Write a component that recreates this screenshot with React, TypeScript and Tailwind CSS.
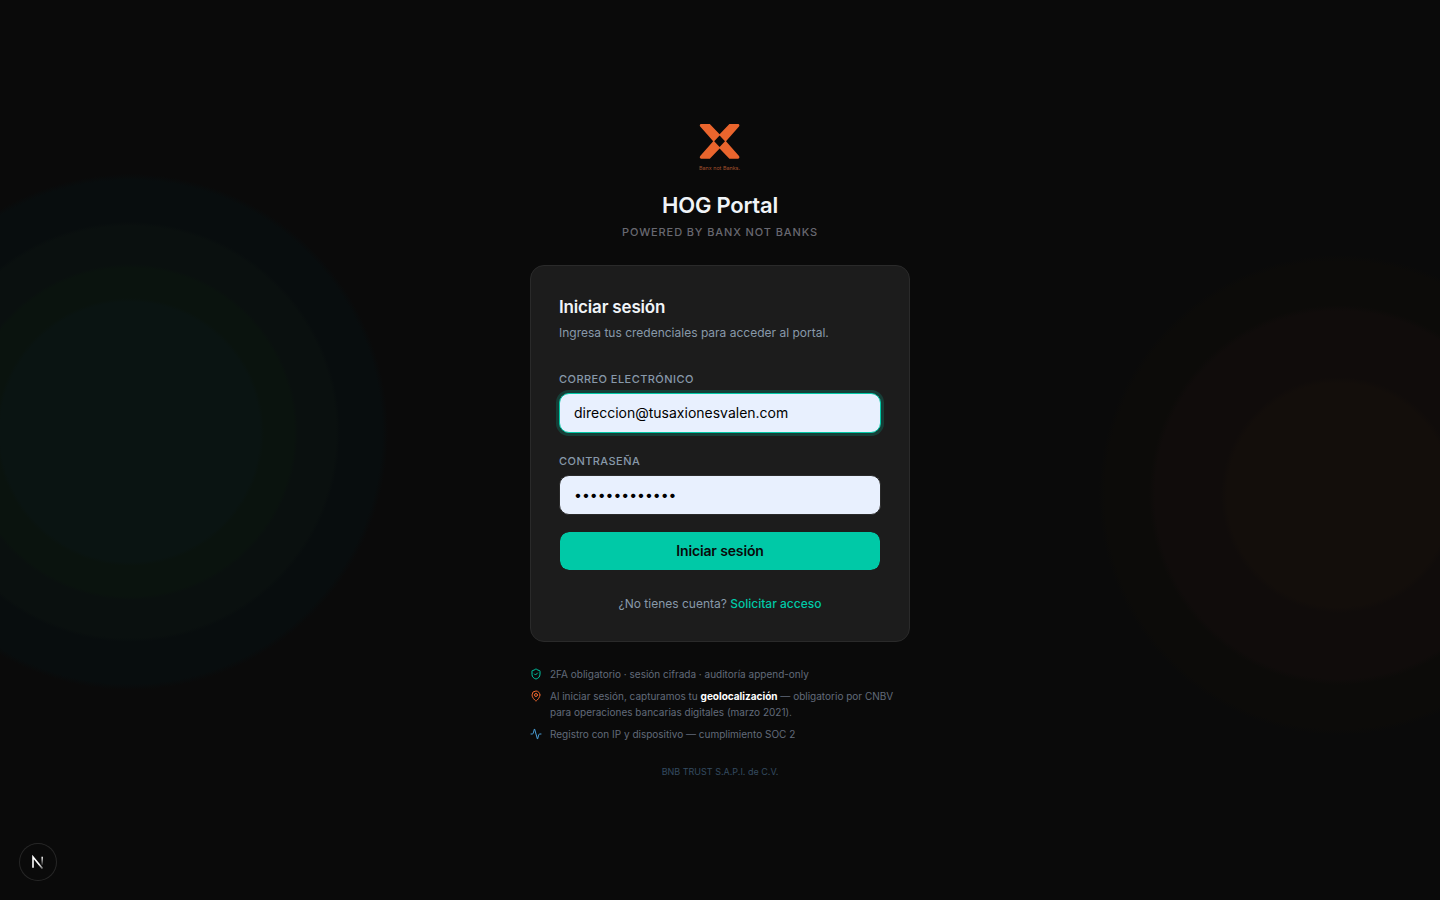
import { useState } from "react";
import { Activity, MapPin, ShieldCheck } from "lucide-react";

function BrandMark() {
  return (
    <svg viewBox="0 0 48 48" className="size-12" role="img" aria-label="Banx not Banks">
      <path
        fill="#ea652d"
        fillRule="evenodd"
        d="M5 0H13.8L23.6 10.2 33.4 0H42.2C43.4 0.2 43.8 1.4 43 2.6L30 17.3 43 32C43.8 33.2 43.4 34.4 42.2 34.7H33.4L23.6 24.5 13.8 34.7H5C3.8 34.4 3.4 33.2 4.2 32L17.2 17.3 4.2 2.6C3.4 1.4 3.8 0.2 5 0ZM23.6 11.6 18.2 17.3 23.6 23.1 29 17.3Z"
      />
      <text x="23.5" y="46" textAnchor="middle" fontSize="5.4" fill="#a34f2b" fontFamily="Inter, sans-serif">
        Banx not Banks.
      </text>
    </svg>
  );
}

const labelClass = "block text-[11px] leading-4 font-medium tracking-[0.04em] text-[#8899aa] uppercase";
const fieldClass =
  "mt-1.5 block h-10 w-full rounded-[10px] border border-[#2a2a2a] bg-[#e8f0fe] px-3.5 pb-0.5 text-sm text-black outline-none focus:border-[#00c9a7] focus:ring-3 focus:ring-[#00c9a7]/20";

export default function App() {
  const [email, setEmail] = useState("direccion@tusaxionesvalen.com");
  const [password, setPassword] = useState("contrasena123");

  return (
    <div className="relative flex min-h-screen flex-col items-center justify-center overflow-hidden bg-[#0a0a0a] px-4 pt-0.5 font-['Inter',sans-serif] text-[#f0f4f8]">
      <div className="pointer-events-none absolute top-[48%] left-[9%] size-[520px] -translate-x-1/2 -translate-y-1/2 rounded-full bg-[radial-gradient(circle_closest-side,#0a1412_130px,#0a130e_134px,#0a130e_164px,#0a100f_168px,#0a100f_206px,#080d0e_210px,#080d0e_252px,#0a0a0a_258px)]" />
      <div className="pointer-events-none absolute top-[55%] left-[93%] size-[500px] -translate-x-1/2 -translate-y-1/2 rounded-full bg-[radial-gradient(circle_closest-side,#130e0b_112px,#100c0b_118px,#100c0b_184px,#0c0b09_190px,#0c0b09_234px,#0a0a0a_240px)]" />

      <main className="relative w-full max-w-[380px]">
        <header className="flex flex-col items-center">
          <BrandMark />
          <h1 className="mt-4 text-[22px] leading-[34px] font-semibold tracking-[-0.01em]">HOG Portal</h1>
          <p className="mt-0.5 text-[11px] leading-[17px] font-medium tracking-[0.08em] text-[#686870] uppercase">
            Powered by Banx not Banks
          </p>
        </header>

        <section className="mt-6 rounded-[14px] border border-[#2a2a2a] bg-[#1c1c1c] p-7">
          <h2 className="text-[17px] leading-[26px] font-semibold tracking-[-0.01em]">Iniciar sesión</h2>
          <p className="mt-1 text-xs leading-[18px] text-[#8899aa]">Ingresa tus credenciales para acceder al portal.</p>

          <form className="mt-[29px]" onSubmit={(e) => e.preventDefault()}>
            <label htmlFor="email" className={labelClass}>
              Correo electrónico
            </label>
            <input
              id="email"
              type="email"
              autoFocus
              value={email}
              onChange={(e) => setEmail(e.target.value)}
              className={`${fieldClass} caret-transparent`}
            />
            <label htmlFor="password" className={`${labelClass} mt-5`}>
              Contraseña
            </label>
            <input
              id="password"
              type="password"
              value={password}
              onChange={(e) => setPassword(e.target.value)}
              className={fieldClass}
            />
            <button
              type="submit"
              className="mt-4 block h-10 w-full rounded-[10px] border border-[#1c1c1c] bg-[#00c9a7] bg-clip-padding text-sm font-semibold tracking-[-0.01em] text-[#0a0a0a]"
            >
              Iniciar sesión
            </button>
          </form>

          <p className="mt-6 text-center text-xs leading-[18px] text-[#8899aa]">
            ¿No tienes cuenta?{" "}
            <a href="#solicitar" className="font-medium text-[#00c9a7]">
              Solicitar acceso
            </a>
          </p>
        </section>

        <ul className="mt-6 space-y-1.5 text-[10px] leading-4 text-[#626a7a]">
          <li className="flex gap-2">
            <ShieldCheck className="mt-0.5 size-3 shrink-0 text-[#00c9a7]" />
            <span>2FA obligatorio · sesión cifrada · auditoría append-only</span>
          </li>
          <li className="flex gap-2">
            <MapPin className="mt-0.5 size-3 shrink-0 text-[#ea652d]" />
            <span>
              Al iniciar sesión, capturamos tu <strong className="font-bold text-white">geolocalización</strong> —
              obligatorio por CNBV para operaciones bancarias digitales (marzo 2021).
            </span>
          </li>
          <li className="flex gap-2">
            <Activity className="mt-0.5 size-3 shrink-0 text-[#4a9fd8]" />
            <span>Registro con IP y dispositivo — cumplimiento SOC 2</span>
          </li>
        </ul>

        <footer className="mt-6 text-center text-[9px] leading-3 text-[#344a60]">BNB TRUST S.A.P.I. de C.V.</footer>
      </main>

      <button
        type="button"
        aria-label="Next.js"
        className="fixed bottom-5 left-5 flex size-9 items-center justify-center rounded-full bg-[#0a0a0a] ring-1 ring-[#272727]"
      >
        <svg viewBox="0 0 14 14" className="size-3.5" fill="none" strokeWidth="1.6">
          <defs>
            <linearGradient id="diag" x1="2" y1="2" x2="12" y2="14" gradientUnits="userSpaceOnUse">
              <stop offset="0.6" stopColor="#fff" />
              <stop offset="1" stopColor="#fff" stopOpacity="0.3" />
            </linearGradient>
            <linearGradient id="stem" x1="0" y1="1" x2="0" y2="11" gradientUnits="userSpaceOnUse">
              <stop stopColor="#fff" />
              <stop offset="1" stopColor="#fff" stopOpacity="0" />
            </linearGradient>
          </defs>
          <path d="M2 12.8V2L11.5 13.6" stroke="url(#diag)" />
          <path d="M11.2 1.8V10" stroke="url(#stem)" />
        </svg>
      </button>
    </div>
  );
}
